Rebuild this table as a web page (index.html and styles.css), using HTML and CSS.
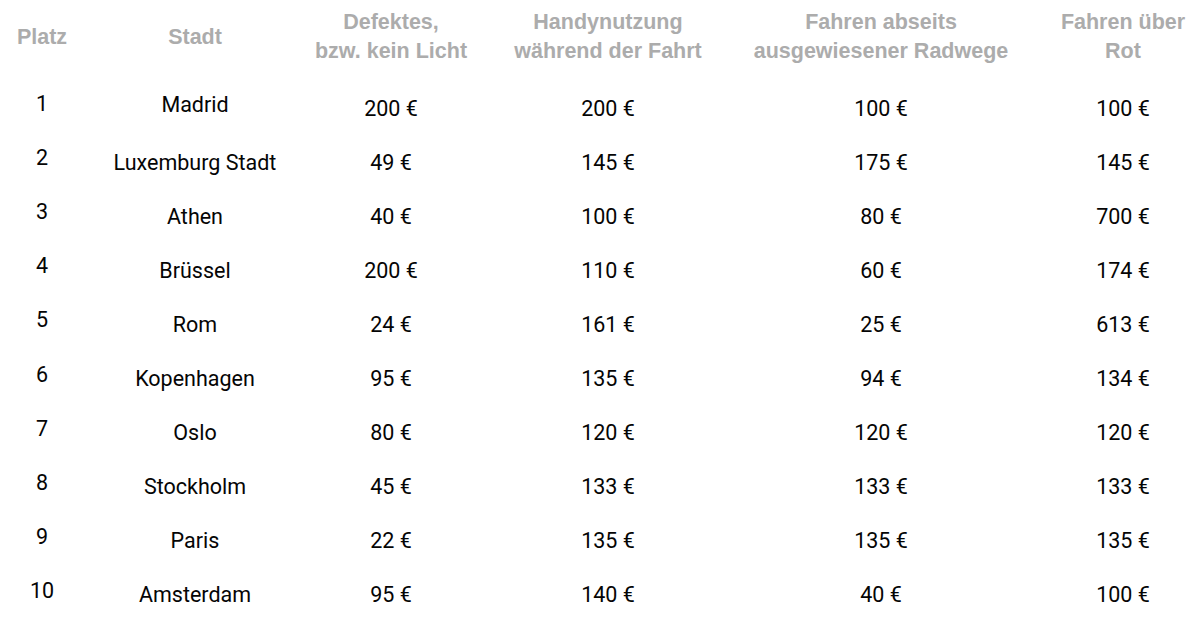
FILE: index.html
```html
<!DOCTYPE html>
<html lang="de">
<head>
<meta charset="utf-8">
<title>Bußgelder</title>
<link rel="stylesheet" href="styles.css">
</head>
<body>
<div class="table">
  <div class="row head">
    <div class="cell">Platz</div>
    <div class="cell">Stadt</div>
    <div class="cell">Defektes,<br>bzw. kein Licht</div>
    <div class="cell">Handynutzung<br>während der Fahrt</div>
    <div class="cell">Fahren abseits<br>ausgewiesener Radwege</div>
    <div class="cell">Fahren über<br>Rot</div>
  </div>
  <div class="row"><div class="cell rank">1</div><div class="cell city up">Madrid</div><div class="cell">200 €</div><div class="cell">200 €</div><div class="cell">100 €</div><div class="cell">100 €</div></div>
  <div class="row"><div class="cell rank">2</div><div class="cell city">Luxemburg Stadt</div><div class="cell">49 €</div><div class="cell">145 €</div><div class="cell">175 €</div><div class="cell">145 €</div></div>
  <div class="row"><div class="cell rank">3</div><div class="cell city">Athen</div><div class="cell">40 €</div><div class="cell">100 €</div><div class="cell">80 €</div><div class="cell">700 €</div></div>
  <div class="row"><div class="cell rank">4</div><div class="cell city">Brüssel</div><div class="cell">200 €</div><div class="cell">110 €</div><div class="cell">60 €</div><div class="cell">174 €</div></div>
  <div class="row"><div class="cell rank">5</div><div class="cell city">Rom</div><div class="cell">24 €</div><div class="cell">161 €</div><div class="cell">25 €</div><div class="cell">613 €</div></div>
  <div class="row"><div class="cell rank">6</div><div class="cell city">Kopenhagen</div><div class="cell">95 €</div><div class="cell">135 €</div><div class="cell">94 €</div><div class="cell">134 €</div></div>
  <div class="row"><div class="cell rank">7</div><div class="cell city">Oslo</div><div class="cell">80 €</div><div class="cell">120 €</div><div class="cell">120 €</div><div class="cell">120 €</div></div>
  <div class="row"><div class="cell rank">8</div><div class="cell city">Stockholm</div><div class="cell">45 €</div><div class="cell">133 €</div><div class="cell">133 €</div><div class="cell">133 €</div></div>
  <div class="row"><div class="cell rank">9</div><div class="cell city">Paris</div><div class="cell">22 €</div><div class="cell">135 €</div><div class="cell">135 €</div><div class="cell">135 €</div></div>
  <div class="row"><div class="cell rank">10</div><div class="cell city">Amsterdam</div><div class="cell">95 €</div><div class="cell">140 €</div><div class="cell">40 €</div><div class="cell">100 €</div></div>
</div>
</body>
</html>
```

FILE: styles.css
```css
html, body {
  margin: 0;
  padding: 0;
  background: #ffffff;
  overflow: hidden;
}

.table {
  width: 1224px;
  font-family: Roboto, "Liberation Sans", sans-serif;
  font-size: 21.5px;
  color: #050505;
}

.row {
  display: grid;
  grid-template-columns: 84px 222px 170px 264px 282px 202px;
  align-items: center;
  height: 54.1px;
}

.cell {
  text-align: center;
  white-space: nowrap;
}

.head {
  height: auto;
  padding: 8px 0 15px;
  font-family: "Liberation Sans", Arial, sans-serif;
  font-weight: bold;
  font-size: 21.5px;
  line-height: 29px;
  color: #acacac;
}

.rank {
  padding-bottom: 9px;
}

.up {
  padding-bottom: 8px;
}
```
